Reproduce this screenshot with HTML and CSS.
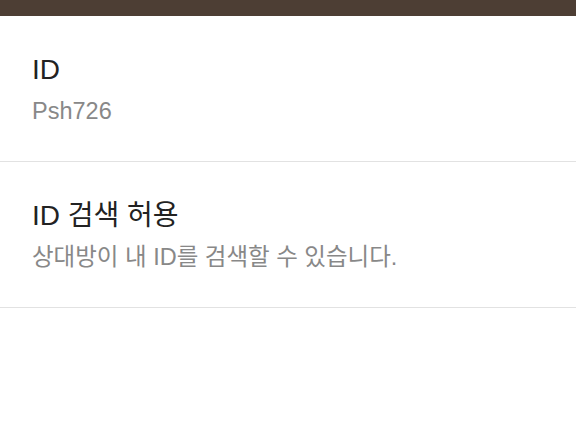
FILE: index.html
```html
<!DOCTYPE html>
<html lang="ko">
<head>
  <meta charset="UTF-8">
  <meta name="viewport" content="width=device-width, initial-scale=1.0">
  <title>ID 설정</title>
  <link rel="stylesheet" href="styles.css">
</head>
<body>

<header class="topbar"></header>

<div class="settings">
  <div class="row">
    <div class="row-title">ID</div>
    <div class="row-sub">Psh726</div>
  </div>
  <div class="row">
    <div class="row-title">ID 검색 허용</div>
    <div class="row-sub">상대방이 내 ID를 검색할 수 있습니다.</div>
  </div>
</div>

</body>
</html>
```

FILE: styles.css
```css
body {
  font-family: "Liberation Sans", "Noto Sans CJK KR", sans-serif;
  margin: 0;
  padding: 0;
  background-color: #fff;
}
.topbar {
  height: 16px;
  background-color: #4d3e34;
}
.row {
  padding: 37px 32px 34px;
  border-bottom: 1px solid #e2e2e2;
}
.row-title {
  font-size: 28px;
  line-height: 34px;
  color: #222;
}
.row-sub {
  font-size: 23.5px;
  line-height: 32px;
  margin-top: 8px;
  color: #888;
}
```
